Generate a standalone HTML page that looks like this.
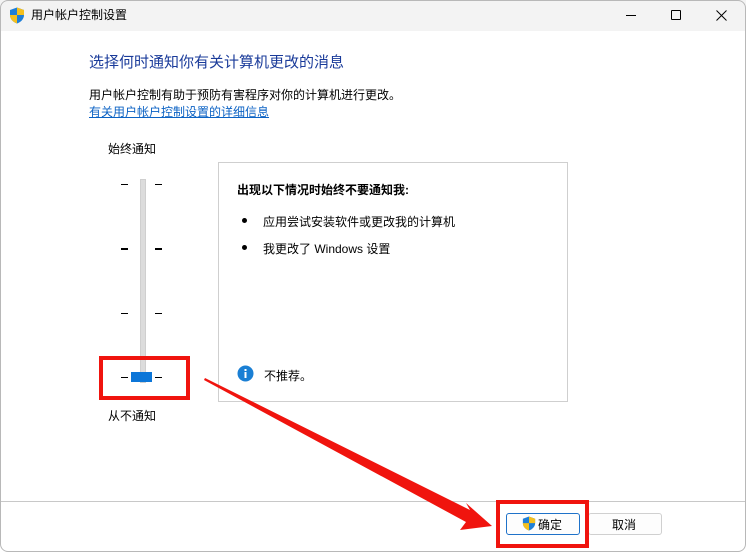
<!DOCTYPE html>
<html><head><meta charset="utf-8"><style>
*{margin:0;padding:0;box-sizing:border-box}
body{width:746px;height:553px;background:#fff;font-family:"Liberation Sans","Noto Sans CJK SC",sans-serif;font-size:12px;color:#000;position:relative;overflow:hidden}
.win{position:absolute;left:0;top:0;width:746px;height:552px;background:#fff;overflow:hidden}
.frame{position:absolute;left:0;top:0;width:746px;height:552px;border:1px solid #b8b8b8;border-radius:8px}
.tb{position:absolute;left:0;top:0;width:100%;height:31px;background:#f3f3f3}
.a{position:absolute;white-space:nowrap}
.tick{position:absolute;height:1px;width:7px;background:#000}
.tick.b{height:2px}
</style></head><body>
<div class="win">
<div class="tb"></div>
<svg class="a" style="left:9px;top:7px" width="16" height="17" viewBox="0 0 16 17"><path d="M8 0.5 L15 3 V8 C15 12 12 15 8 16.5 C4 15 1 12 1 8 V3 Z" fill="#1e7fd8"/><path d="M8 0.5 L15 3 V8 H8 Z" fill="#f4c01e"/><path d="M1 8 H8 V16.5 C4 15 1 12 1 8Z" fill="#f4c01e"/></svg>
<div class="a" style="left:31px;top:6px;font-size:12px">用户帐户控制设置</div>
<div class="a" style="left:626px;top:15px;width:10px;height:1px;background:#000"></div>
<div class="a" style="left:671px;top:10px;width:10px;height:10px;border:1px solid #000;border-radius:1px"></div>
<svg class="a" style="left:716px;top:10px" width="11" height="11"><path d="M0.5 0.5L10.5 10.5M10.5 0.5L0.5 10.5" stroke="#000" stroke-width="1"/></svg>

<div class="a" style="left:89px;top:51px;font-size:15px;color:#1a3b9a">选择何时通知你有关计算机更改的消息</div>
<div class="a" style="left:89px;top:86px">用户帐户控制有助于预防有害程序对你的计算机进行更改。</div>
<div class="a" style="left:89px;top:103px;color:#0b62c4;text-decoration:underline">有关用户帐户控制设置的详细信息</div>

<div class="a" style="left:108px;top:140px">始终通知</div>
<div class="a" style="left:108px;top:407px">从不通知</div>
<div class="a" style="left:140px;top:179px;width:6px;height:204px;background:#dcdcdc;border:1px solid #cfcfcf"></div>
<div class="tick" style="left:121px;top:184px"></div><div class="tick" style="left:155px;top:184px"></div>
<div class="tick b" style="left:121px;top:248px"></div><div class="tick b" style="left:155px;top:248px"></div>
<div class="tick" style="left:121px;top:313px"></div><div class="tick" style="left:155px;top:313px"></div>
<div class="tick" style="left:121px;top:377px"></div><div class="tick" style="left:155px;top:377px"></div>
<div class="a" style="left:131px;top:372px;width:21px;height:10px;background:#0c76d8"></div>
<div class="a" style="left:99px;top:356px;width:91px;height:44px;border:4px solid #f0140e"></div>

<div class="a" style="left:218px;top:162px;width:350px;height:240px;border:1px solid #cfcfcf"></div>
<div class="a" style="left:237px;top:181px;font-weight:bold">出现以下情况时始终不要通知我:</div>
<div class="a" style="left:242px;top:218px;width:5px;height:5px;border-radius:50%;background:#000"></div>
<div class="a" style="left:263px;top:213px">应用尝试安装软件或更改我的计算机</div>
<div class="a" style="left:242px;top:245px;width:5px;height:5px;border-radius:50%;background:#000"></div>
<div class="a" style="left:263px;top:240px">我更改了 Windows 设置</div>
<svg class="a" style="left:237px;top:365px" width="17" height="17"><circle cx="8.5" cy="8.5" r="8" fill="#1a7fd4"/><rect x="7.5" y="7" width="2" height="6" fill="#fff"/><rect x="7.5" y="4" width="2" height="2" fill="#fff"/></svg>
<div class="a" style="left:264px;top:367px">不推荐。</div>

<div class="a" style="left:0;top:501px;width:746px;height:1px;background:#c8c8c8"></div>
<div class="a" style="left:506px;top:513px;width:74px;height:22px;border:1px solid #1f72c9;border-radius:3px;background:#fdfdfd"></div>
<svg class="a" style="left:522px;top:516px" width="14" height="15" viewBox="0 0 16 17"><path d="M8 0.5 L15 3 V8 C15 12 12 15 8 16.5 C4 15 1 12 1 8 V3 Z" fill="#1e7fd8"/><path d="M8 0.5 L15 3 V8 H8 Z" fill="#f4c01e"/><path d="M1 8 H8 V16.5 C4 15 1 12 1 8Z" fill="#f4c01e"/></svg>
<div class="a" style="left:538px;top:516px">确定</div>
<div class="a" style="left:588px;top:513px;width:74px;height:22px;border:1px solid #d0d0d0;border-radius:3px;background:#fdfdfd"></div>
<div class="a" style="left:612px;top:516px">取消</div>
<div class="a" style="left:496px;top:500px;width:93px;height:48px;border:4px solid #f0140e"></div>

<svg class="a" style="left:0;top:0" width="746" height="553"><polygon points="205,378 470,510 466,503 492,526 460,530 466,522 204,380" fill="#f0140e"/></svg>
</div>
<div class="frame"></div>
</body></html>
